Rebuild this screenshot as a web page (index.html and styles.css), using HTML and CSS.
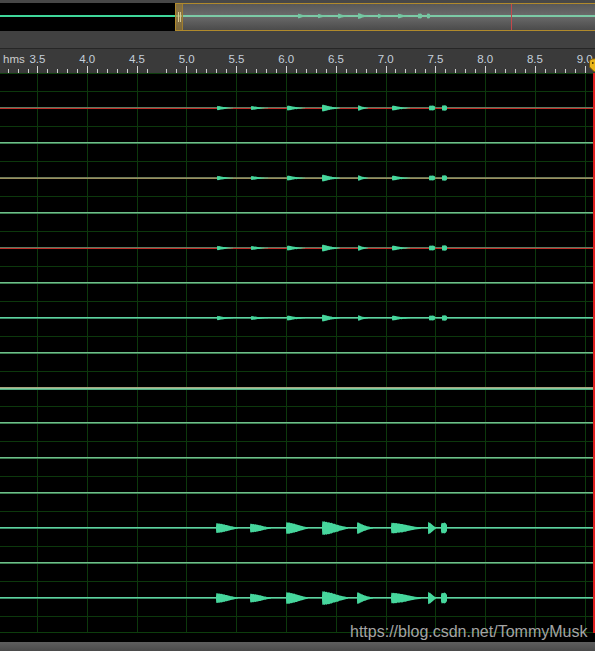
FILE: index.html
```html
<!DOCTYPE html>
<html>
<head>
<meta charset="utf-8">
<link rel="stylesheet" href="styles.css">
</head>
<body>
<svg class="defs" width="0" height="0" aria-hidden="true">
  <defs>
    <path id="bl" d="M0,-0.25 L0.005,-0.8 L0.02,-0.95 L0.035,-0.85 L0.05,-1 L0.07,-0.9 L0.09,-0.96 L0.11,-0.82 L0.14,-0.88 L0.17,-0.76 L0.2,-0.8 L0.23,-0.68 L0.26,-0.71 L0.3,-0.58 L0.34,-0.61 L0.38,-0.48 L0.42,-0.5 L0.47,-0.4 L0.52,-0.42 L0.57,-0.32 L0.63,-0.31 L0.69,-0.24 L0.75,-0.23 L0.82,-0.16 L0.9,-0.13 L1,-0.07 L1,0.07 L0.9,0.14 L0.82,0.18 L0.75,0.25 L0.69,0.27 L0.63,0.34 L0.57,0.36 L0.52,0.45 L0.47,0.44 L0.42,0.54 L0.38,0.52 L0.34,0.65 L0.3,0.62 L0.26,0.75 L0.23,0.72 L0.2,0.85 L0.17,0.8 L0.14,0.92 L0.11,0.86 L0.09,1 L0.07,0.93 L0.05,1 L0.035,0.9 L0.02,0.98 L0.005,0.82 L0,0.25 Z"/>
    <path id="bb" d="M0,-0.25 L0.01,-0.85 L0.03,-1 L0.06,-0.88 L0.09,-0.96 L0.13,-0.86 L0.17,-0.9 L0.22,-0.8 L0.27,-0.83 L0.32,-0.72 L0.37,-0.74 L0.43,-0.62 L0.49,-0.6 L0.55,-0.48 L0.61,-0.46 L0.67,-0.36 L0.73,-0.33 L0.8,-0.25 L0.87,-0.2 L0.94,-0.14 L1,-0.09 L1,0.09 L0.94,0.16 L0.87,0.22 L0.8,0.28 L0.73,0.37 L0.67,0.4 L0.61,0.52 L0.55,0.53 L0.49,0.66 L0.43,0.66 L0.37,0.8 L0.32,0.77 L0.27,0.88 L0.22,0.84 L0.17,0.96 L0.13,0.9 L0.09,1 L0.06,0.93 L0.03,1 L0.01,0.88 L0,0.25 Z"/>
    <path id="bk" d="M0,-0.6 L0.12,-0.95 L0.35,-0.85 L0.55,-1 L0.8,-0.85 L1,-0.55 L1,0.55 L0.8,0.88 L0.55,1 L0.35,0.9 L0.12,1 L0,0.65 Z"/>
    <g id="small" fill="#46d69c">
      <use href="#bl" transform="translate(217 17) scale(16 2.2)"/>
      <use href="#bl" transform="translate(251 17) scale(17 2)"/>
      <use href="#bl" transform="translate(287 17) scale(18 2.5)"/>
      <use href="#bl" transform="translate(322 17) scale(18 3.5)"/>
      <use href="#bl" transform="translate(358 17) scale(10 2.8)"/>
      <use href="#bl" transform="translate(392 17) scale(18 2.5)"/>
      <use href="#bk" transform="translate(429 17) scale(6 2.6)"/>
      <use href="#bk" transform="translate(442 17) scale(5 2.8)"/>
    </g>
    <g id="big" fill="#46d69c">
      <use href="#bb" transform="translate(216 17) scale(22 5)"/>
      <use href="#bb" transform="translate(250 17) scale(21 4.5)"/>
      <use href="#bb" transform="translate(286 17) scale(22 6)"/>
      <use href="#bb" transform="translate(322 17) scale(26 7)"/>
      <use href="#bl" transform="translate(357 17) scale(16 6)"/>
      <use href="#bb" transform="translate(391 17) scale(30 5.5)"/>
      <use href="#bb" transform="translate(428 17) scale(8 6.2)"/>
      <use href="#bk" transform="translate(441 17) scale(6 5.5)"/>
    </g>
  </defs>
</svg>
<div class="app">
  <div class="topbar"></div>
  <div class="overview">
    <div class="sel">
      <div class="handle"><i></i><i></i></div>
      <svg class="mini" width="420" height="26" viewBox="0 0 420 26">
        <g fill="#74c8a2">
          <use href="#bl" transform="translate(115 12) scale(10 2.4)"/>
          <use href="#bl" transform="translate(135 12) scale(10 2.2)"/>
          <use href="#bl" transform="translate(155 12) scale(10 2.6)"/>
          <use href="#bl" transform="translate(175 12) scale(11 3)"/>
          <use href="#bl" transform="translate(195 12) scale(7 2.4)"/>
          <use href="#bl" transform="translate(215 12) scale(11 2.4)"/>
          <use href="#bk" transform="translate(235 12) scale(4 2.6)"/>
          <use href="#bk" transform="translate(244 12) scale(3 2.6)"/>
        </g>
        <rect x="328" y="0" width="1" height="26" fill="#c4484a"/>
      </svg>
    </div>
  </div>
  <div class="panel"></div>
  <div class="ruler">
    <div class="labels">
      <span class="hms">hms</span>
      <span class="lab">3.5</span><span class="lab">4.0</span><span class="lab">4.5</span><span class="lab">5.0</span>
      <span class="lab">5.5</span><span class="lab">6.0</span><span class="lab">6.5</span><span class="lab">7.0</span>
      <span class="lab">7.5</span><span class="lab">8.0</span><span class="lab">8.5</span><span class="lab">9.0</span>
    </div>
    <div class="ticks"></div>
    <svg class="ph" width="13" height="15" viewBox="0 0 13 15">
      <path d="M1.5,4 Q1.5,0.8 6.5,0.8 Q11.5,0.8 11.5,4 L11.5,9 L6.5,14 L1.5,9 Z" fill="#e8b41a" stroke="#7a5806" stroke-width="1"/>
      <rect x="4" y="4" width="1.5" height="2" fill="#5a4206"/>
      <rect x="7.5" y="4" width="1.5" height="2" fill="#5a4206"/>
    </svg>
  </div>
  <div class="main">
    <div class="lanes">
      <div class="lane">
        <svg class="wave" width="595" height="35" viewBox="0 0 595 35">
          <rect x="0" y="16" width="595" height="1" fill="#5c7a60"/>
          <rect x="0" y="17" width="595" height="1" fill="#c0302a"/>
          <use href="#small"/>
        </svg>
      </div>
      <div class="lane"><div class="ln sep"></div></div>
      <div class="lane">
        <svg class="wave" width="595" height="35" viewBox="0 0 595 35">
          <rect x="0" y="16" width="595" height="1" fill="#6e7a58"/>
          <rect x="0" y="17" width="595" height="1" fill="#9a8e5c"/>
          <use href="#small"/>
        </svg>
      </div>
      <div class="lane"><div class="ln sep"></div></div>
      <div class="lane">
        <svg class="wave" width="595" height="35" viewBox="0 0 595 35">
          <rect x="0" y="16" width="595" height="1" fill="#5c7a60"/>
          <rect x="0" y="17" width="595" height="1" fill="#c0302a"/>
          <use href="#small"/>
        </svg>
      </div>
      <div class="lane"><div class="ln sep"></div></div>
      <div class="lane">
        <svg class="wave" width="595" height="35" viewBox="0 0 595 35">
          <rect x="0" y="16" width="595" height="1" fill="#5ed2a0"/>
          <rect x="0" y="17" width="595" height="1" fill="#3a8c68"/>
          <use href="#small"/>
        </svg>
      </div>
      <div class="lane"><div class="ln sep"></div></div>
      <div class="lane"><div class="ln thick"></div></div>
      <div class="lane"><div class="ln sep"></div></div>
      <div class="lane"><div class="ln sep"></div></div>
      <div class="lane"><div class="ln sep"></div></div>
      <div class="lane">
        <svg class="wave" width="595" height="35" viewBox="0 0 595 35">
          <rect x="0" y="16" width="595" height="1" fill="#5ed2a0"/>
          <rect x="0" y="17" width="595" height="1" fill="#3a8c68"/>
          <use href="#big"/>
        </svg>
      </div>
      <div class="lane"><div class="ln sep"></div></div>
      <div class="lane">
        <svg class="wave" width="595" height="35" viewBox="0 0 595 35">
          <rect x="0" y="16" width="595" height="1" fill="#5ed2a0"/>
          <rect x="0" y="17" width="595" height="1" fill="#3a8c68"/>
          <use href="#big"/>
        </svg>
      </div>
    </div>
    <div class="playhead"></div>
  </div>
  <div class="gap"></div>
  <div class="bottombar"></div>
  <div class="watermark">https://blog.csdn.net/TommyMusk</div>
</div>
</body>
</html>
```

FILE: styles.css
```css
* {
  box-sizing: border-box;
  margin: 0;
  padding: 0;
}

html,
body {
  background: #000;
}

body {
  width: 595px;
  height: 651px;
  overflow: hidden;
  font-family: "Liberation Sans", Arial, sans-serif;
}

.defs {
  position: absolute;
  width: 0;
  height: 0;
}

.app {
  position: relative;
  width: 595px;
  height: 651px;
  display: flex;
  flex-direction: column;
  overflow: hidden;
}

.topbar {
  height: 3px;
  background: #474747;
}

.overview {
  position: relative;
  height: 28px;
  background:
    linear-gradient(to bottom, transparent 12px, #3fd69a 12px, #3fd69a 14px, transparent 14px),
    #000;
}

.sel {
  position: absolute;
  left: 175px;
  top: 0;
  right: -2px;
  height: 28px;
  border: 1px solid #b08a2c;
  display: flex;
  background:
    linear-gradient(to bottom, transparent 11px, #7ccaa6 11px, #7ccaa6 13px, transparent 13px),
    linear-gradient(to bottom, #585858, #6b6b6b 45%, #4b4b4b);
}

.handle {
  flex: 0 0 7px;
  height: 100%;
  background: rgba(170, 130, 40, 0.5);
  border-right: 1px solid #a07e2e;
  display: flex;
  gap: 1px;
  justify-content: center;
  align-items: center;
}

.handle i {
  display: block;
  width: 1px;
  height: 10px;
  background: #d8c890;
}

.mini {
  display: block;
  flex: 0 0 420px;
}

.panel {
  height: 18px;
  background: #414141;
  border-bottom: 1px solid #262626;
}

.ruler {
  position: relative;
  height: 24px;
  background: #3a3a3a;
  overflow: hidden;
}

.labels {
  display: flex;
  height: 17px;
  padding-top: 4px;
  font-size: 11.5px;
  line-height: 13px;
  color: #c4cfdb;
}

.hms {
  flex: 0 0 12.6px;
  width: 12.6px;
  min-width: 0;
  padding-left: 3px;
  white-space: nowrap;
  color: #cccccc;
}

.lab {
  flex: 0 0 49.75px;
  min-width: 0;
  text-align: center;
}

.ticks {
  --tk: linear-gradient(#d2d2d2, #d2d2d2);
  --mt: repeating-linear-gradient(90deg, #cdcdcd 0, #cdcdcd 1px, transparent 1px, transparent 10px);
  height: 7px;
  background:
    var(--tk) 37px 0 / 1px 100% no-repeat,
    var(--tk) 87px 0 / 1px 100% no-repeat,
    var(--tk) 137px 0 / 1px 100% no-repeat,
    var(--tk) 186px 0 / 1px 100% no-repeat,
    var(--tk) 236px 0 / 1px 100% no-repeat,
    var(--tk) 286px 0 / 1px 100% no-repeat,
    var(--tk) 336px 0 / 1px 100% no-repeat,
    var(--tk) 386px 0 / 1px 100% no-repeat,
    var(--tk) 435px 0 / 1px 100% no-repeat,
    var(--tk) 485px 0 / 1px 100% no-repeat,
    var(--tk) 535px 0 / 1px 100% no-repeat,
    var(--tk) 585px 0 / 1px 100% no-repeat,
    var(--mt) 8px 100% / 29px 4px no-repeat,
    var(--mt) 47px 100% / 40px 4px no-repeat,
    var(--mt) 97px 100% / 40px 4px no-repeat,
    var(--mt) 147px 100% / 10px 4px no-repeat,
    var(--mt) 166px 100% / 20px 4px no-repeat,
    var(--mt) 196px 100% / 40px 4px no-repeat,
    var(--mt) 246px 100% / 40px 4px no-repeat,
    var(--mt) 296px 100% / 40px 4px no-repeat,
    var(--mt) 346px 100% / 40px 4px no-repeat,
    var(--mt) 395px 100% / 40px 4px no-repeat,
    var(--mt) 445px 100% / 40px 4px no-repeat,
    var(--mt) 495px 100% / 40px 4px no-repeat,
    var(--mt) 545px 100% / 40px 4px no-repeat;
}

.ph {
  position: absolute;
  right: -6px;
  bottom: 0;
  display: block;
}

.main {
  --gl: linear-gradient(#0c380c, #0c380c);
  position: relative;
  height: 560px;
  border-top: 1px solid #0d3d0d;
  border-bottom: 1px solid #0d3d0d;
  background:
    var(--gl) 37px 0 / 1px 100% no-repeat,
    var(--gl) 87px 0 / 1px 100% no-repeat,
    var(--gl) 137px 0 / 1px 100% no-repeat,
    var(--gl) 186px 0 / 1px 100% no-repeat,
    var(--gl) 236px 0 / 1px 100% no-repeat,
    var(--gl) 286px 0 / 1px 100% no-repeat,
    var(--gl) 336px 0 / 1px 100% no-repeat,
    var(--gl) 386px 0 / 1px 100% no-repeat,
    var(--gl) 435px 0 / 1px 100% no-repeat,
    var(--gl) 485px 0 / 1px 100% no-repeat,
    var(--gl) 535px 0 / 1px 100% no-repeat,
    var(--gl) 585px 0 / 1px 100% no-repeat,
    repeating-linear-gradient(180deg, transparent 0, transparent 17px, #0c380c 17px, #0c380c 18px, transparent 18px, transparent 35px),
    #000;
}

.lanes {
  display: flex;
  flex-direction: column;
  padding-top: 17px;
}

.lane {
  height: 35px;
  padding-top: 16px;
}

.lane:has(.wave) {
  padding-top: 0;
}

.wave {
  display: block;
}

.ln {
  height: 2px;
}

.sep {
  background: linear-gradient(to bottom, #6fbf8a 0 1px, #3a7a4e 1px 2px);
}

.thick {
  height: 3px;
  background: linear-gradient(to bottom, #a8a27c 0 1px, #8cc8a0 1px 2px, #4fae80 2px 3px);
}

.playhead {
  position: absolute;
  top: -1px;
  bottom: -1px;
  right: 0;
  width: 2px;
  background: #e02020;
}

.gap {
  height: 9px;
  background: #000;
}

.bottombar {
  flex: 1;
  background: linear-gradient(to bottom, #5e5e5e, #4a4a4a);
}

.watermark {
  position: absolute;
  left: 350px;
  top: 624px;
  font-size: 16px;
  line-height: 16px;
  color: #a4a4a4;
  white-space: nowrap;
}
```
